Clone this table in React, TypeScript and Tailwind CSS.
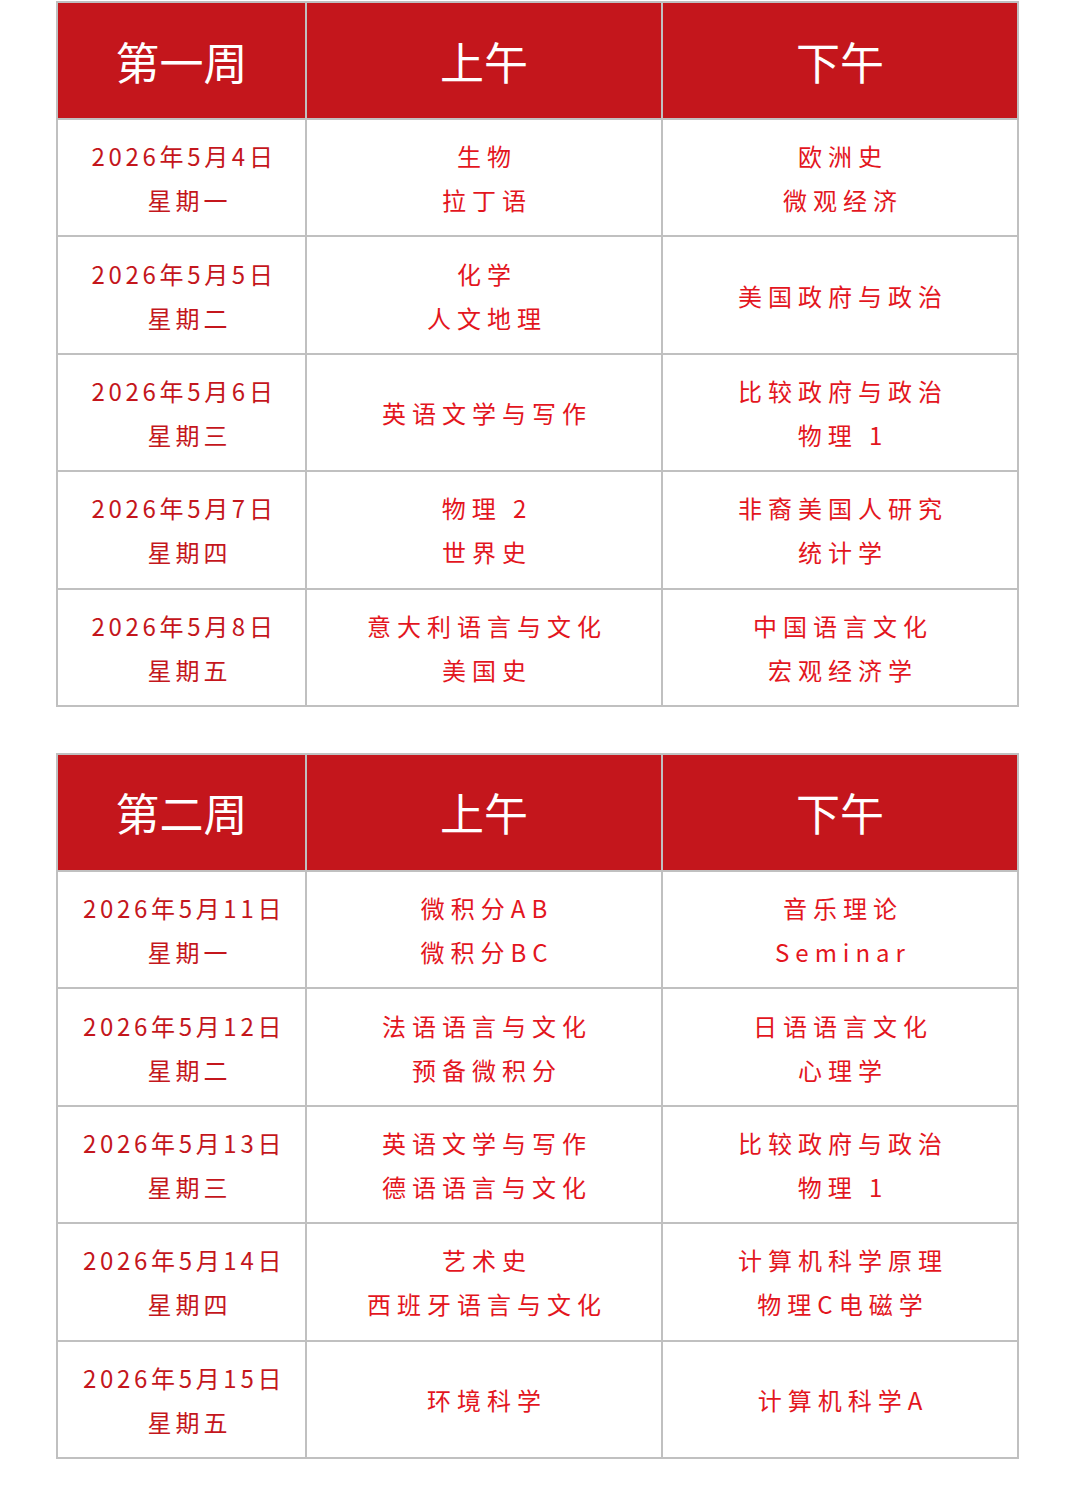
import React from "react";

type Row = { date: string; day: string; am: string[]; pm: string[] };

const week1: Row[] = [
  { date: "2026年5月4日", day: "星期一", am: ["生物", "拉丁语"], pm: ["欧洲史", "微观经济"] },
  { date: "2026年5月5日", day: "星期二", am: ["化学", "人文地理"], pm: ["美国政府与政治"] },
  { date: "2026年5月6日", day: "星期三", am: ["英语文学与写作"], pm: ["比较政府与政治", "物理 1"] },
  { date: "2026年5月7日", day: "星期四", am: ["物理 2", "世界史"], pm: ["非裔美国人研究", "统计学"] },
  { date: "2026年5月8日", day: "星期五", am: ["意大利语言与文化", "美国史"], pm: ["中国语言文化", "宏观经济学"] },
];

const week2: Row[] = [
  { date: "2026年5月11日", day: "星期一", am: ["微积分AB", "微积分BC"], pm: ["音乐理论", "Seminar"] },
  { date: "2026年5月12日", day: "星期二", am: ["法语语言与文化", "预备微积分"], pm: ["日语语言文化", "心理学"] },
  { date: "2026年5月13日", day: "星期三", am: ["英语文学与写作", "德语语言与文化"], pm: ["比较政府与政治", "物理 1"] },
  { date: "2026年5月14日", day: "星期四", am: ["艺术史", "西班牙语言与文化"], pm: ["计算机科学原理", "物理C电磁学"] },
  { date: "2026年5月15日", day: "星期五", am: ["环境科学"], pm: ["计算机科学A"] },
];

const font = { fontFamily: '"Noto Sans CJK SC", "Noto Sans", sans-serif' };

function Lines({ items }: { items: string[] }) {
  return (
    <div className="flex h-[115.4px] flex-col items-center justify-center bg-white pt-[1px] text-[24px] leading-[44px] tracking-[6px] text-[#e3161e]">
      {items.map((t, i) => (
        <div key={i} className="whitespace-pre pl-[6px]">
          {t}
        </div>
      ))}
    </div>
  );
}

function Table({ title, rows }: { title: string; rows: Row[] }) {
  return (
    <div className="ml-[56px] grid w-[963px] grid-cols-[247px_354px_354px] gap-[2px] bg-[#c0c0c0] p-[2px]" style={font}>
      {[title, "上午", "下午"].map((h, i) => (
        <div key={i} className="flex h-[115px] items-center justify-center bg-[#c4161c] text-[44px] text-white">
          {h}
        </div>
      ))}
      {rows.map((r, i) => (
        <React.Fragment key={i}>
          <div className="flex h-[115.4px] flex-col items-center justify-center bg-white pt-[1px] text-[24px] leading-[44px] tracking-[3.7px] text-[#c4161c]">
            <div className="pl-[5px]">{r.date}</div>
            <div className="pl-[16px] tracking-[4px]">{r.day}</div>
          </div>
          <Lines items={r.am} />
          <Lines items={r.pm} />
        </React.Fragment>
      ))}
    </div>
  );
}

export default function App() {
  return (
    <div className="min-h-[1488px] w-[1080px] bg-white pt-[1px]">
      <Table title="第一周" rows={week1} />
      <div className="h-[46px]" />
      <Table title="第二周" rows={week2} />
    </div>
  );
}
